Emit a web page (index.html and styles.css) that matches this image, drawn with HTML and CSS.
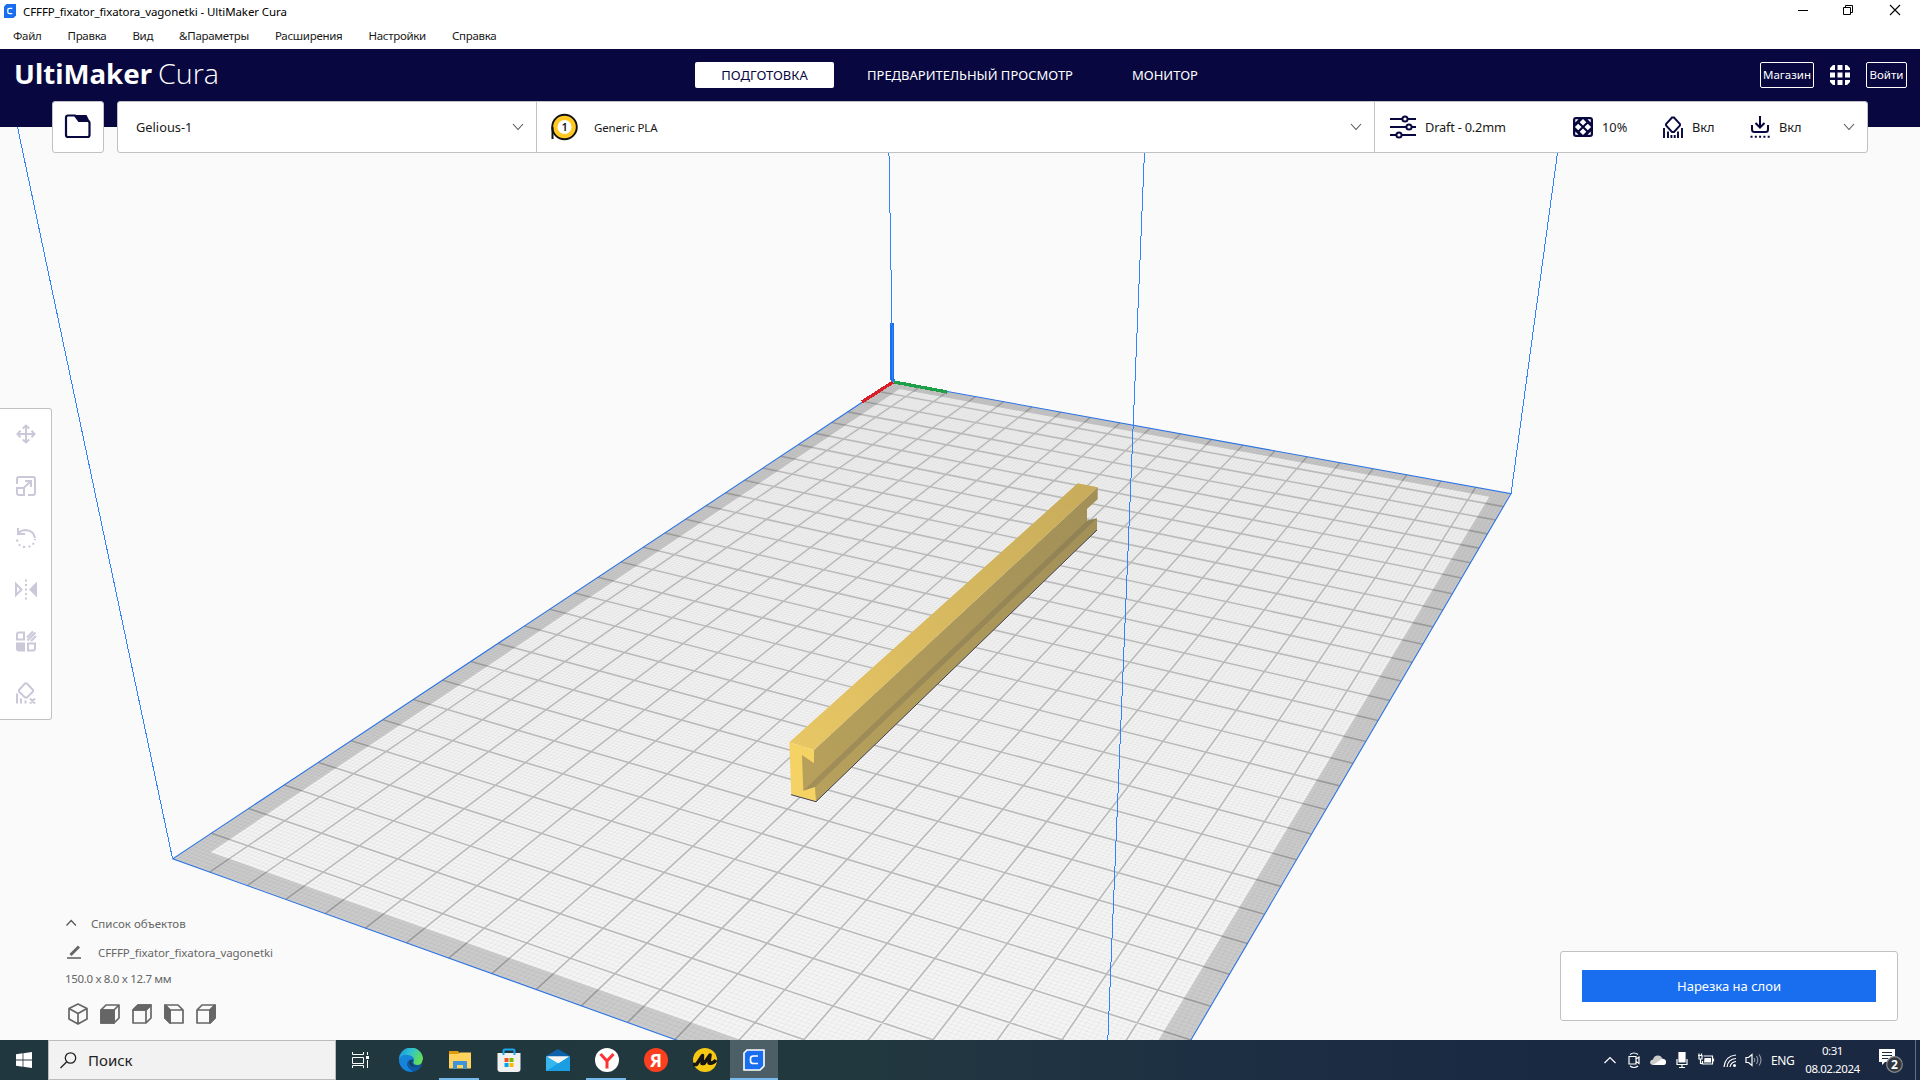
FILE: index.html
```html
<!DOCTYPE html>
<html lang="ru">
<head>
<meta charset="utf-8">
<title>CFFFP_fixator_fixatora_vagonetki - UltiMaker Cura</title>
<link rel="stylesheet" href="styles.css">
</head>
<body>
<div class="titlebar">
  <svg class="app-icon" width="12" height="14" viewBox="0 0 12 14"><path d="M2.500 0H12V11.500L9.500 14H0V2.500Z" fill="#196ef0"/><path d="M8.300 4.300H5.600Q3.800 4.300 3.800 6V8Q3.800 9.700 5.600 9.700H8.300" fill="none" stroke="#fff" stroke-width="1.300"/></svg>
  <span class="title">CFFFP_fixator_fixatora_vagonetki - UltiMaker Cura</span>
  <div class="window-controls">
    <svg width="46" height="20" viewBox="0 0 46 20"><path d="M18 10.500H28" stroke="#000"/></svg>
    <svg width="46" height="20" viewBox="0 0 46 20" fill="none" stroke="#000"><path d="M17.500 7.500H24.500V14.500H17.500ZM19.500 7.500V5.500H26.500V12.500H24.500"/></svg>
    <svg width="46" height="20" viewBox="0 0 46 20"><path d="M18 5L28 15M28 5L18 15" stroke="#000" stroke-width="1.100"/></svg>
  </div>
</div>
<nav class="menubar"><span>Файл</span><span>Правка</span><span>Вид</span><span>&amp;Параметры</span><span>Расширения</span><span>Настройки</span><span>Справка</span></nav>
<header class="header">
  <svg class="logo" width="220" height="52" viewBox="0 0 220 52" fill="#fff"><text class="logo-bold" x="14" y="34.500" textLength="138" lengthAdjust="spacingAndGlyphs">UltiMaker</text><text class="logo-light" x="158" y="34.500" textLength="61" lengthAdjust="spacingAndGlyphs">Cura</text></svg>
  <div class="stages"><span class="stage active">ПОДГОТОВКА</span><span class="stage">ПРЕДВАРИТЕЛЬНЫЙ ПРОСМОТР</span><span class="stage">МОНИТОР</span></div>
  <div class="account">
    <span class="outline-btn market">Магазин</span>
    <svg width="20" height="20" viewBox="0 0 20 20" fill="#fff"><path d="M3 0H5V5H0V3ZM7.500 0H12.500V5H7.500ZM15 0H17L20 3V5H15ZM0 7.500H5V12.500H0ZM7.500 7.500H12.500V12.500H7.500ZM15 7.500H20V12.500H15ZM0 15H5V20H3L0 17ZM7.500 15H12.500V20H7.500ZM15 15H20V17L17 20H15Z"/></svg>
    <span class="outline-btn">Войти</span>
  </div>
</header>
<main class="view">
  <svg class="scene" viewBox="0 127 1920 913">
    <defs>
      <linearGradient id="top" gradientUnits="userSpaceOnUse" x1="800" y1="745" x2="1090" y2="485"><stop offset="0" stop-color="#e7c664"/><stop offset="1" stop-color="#c8ac5b"/></linearGradient>
      <linearGradient id="side" gradientUnits="userSpaceOnUse" x1="815" y1="775" x2="1095" y2="510"><stop offset="0" stop-color="#b6a05b"/><stop offset="1" stop-color="#a29058"/></linearGradient>
      <linearGradient id="groove" gradientUnits="userSpaceOnUse" x1="810" y1="785" x2="1090" y2="520"><stop offset="0" stop-color="#a18e59"/><stop offset="1" stop-color="#918255"/></linearGradient>
      <linearGradient id="bed" x1="0" y1="0" x2="0" y2="1"><stop offset="0" stop-color="#f1f1f1"/><stop offset=".75" stop-color="#f4f4f4"/></linearGradient>
    </defs>
    <g id="plate"></g>
    <g class="axes">
      <path class="axis-z" d="M892 323V378L893 381"/>
      <path class="axis-x" d="M893 382L862 402"/>
      <path class="axis-y" d="M894 382L947 392"/>
    </g>
    <g class="model">
      <path fill="url(#side)" d="M814 750L1097.700 487.300V499.300L1087 509V520.700L1097 518.300V530L816 801.700L802 790V755Z"/>
      <path fill="url(#groove)" d="M803.300 790.700L1087 520.700L1097 518.300L815 787Z"/>
      <path fill="url(#top)" d="M789.300 742.300L1077.700 483.300L1097.700 487.300L814 750Z"/>
      <path fill="#f5d264" d="M789.300 742.300L814 750V763.300L802 755L803.300 790.700L815 787L816 801.700L791.300 794.700Z"/>
      <path d="M791 794.700L816 801.700L1097 530" fill="none" stroke="#3f4054" stroke-width="1"/>
    </g>
    <path class="volume" d="M172.500 858.500L17.500 127M893 382L888.500 127M1511 494L1561 127M1101.500 1193L1145.500 127"/>
  </svg>

  <div class="stage-bar">
    <div class="card open"><svg width="28" height="28" viewBox="0 0 28 28"><path d="M4 2.500H11L15 8H23.500Q25.500 8 25.500 10V22Q25.500 24 23.500 24H4Q2 24 2 22V4.500Q2 2.500 4 2.500Z" fill="none" stroke="#08073f" stroke-width="2.200"/><path d="M10 2H22.500L25.500 8H15Z" fill="#08073f"/></svg></div>
    <div class="card settings">
      <div class="cell printer"><span>Gelious-1</span><svg class="chev" width="12" height="8" viewBox="0 0 12 8"><path d="M1 1L6 6.500L11 1"/></svg></div>
      <div class="cell material">
        <svg width="28" height="28" viewBox="0 0 28 28"><circle cx="14.500" cy="14" r="12.300" fill="#ffc924" stroke="#111" stroke-width="1.900"/><path d="M2.500 14V26" stroke="#111" stroke-width="2"/><circle cx="14.500" cy="14" r="7" fill="#fff"/><text class="spool-no" x="14.500" y="18" text-anchor="middle">1</text></svg>
        <span>Generic PLA</span><svg class="chev" width="12" height="8" viewBox="0 0 12 8"><path d="M1 1L6 6.500L11 1"/></svg></div>
      <div class="cell profile">
        <svg width="26" height="24" viewBox="0 0 26 24" fill="none" stroke="#08073f" stroke-width="2"><path d="M0 4H12.500M17.500 4H26M0 12H16.500M21.500 12H26M0 20H6.500M11.500 20H26"/><circle cx="15" cy="4" r="2.600"/><circle cx="19" cy="12" r="2.600"/><circle cx="9" cy="20" r="2.600"/></svg>
        <span class="draft">Draft - 0.2mm</span>
        <svg width="20" height="20" viewBox="0 0 20 20"><rect width="20" height="20" rx="3" fill="#08073f"/><path fill="#fff" d="M10 1.900L13.300 5.200L10 8.500L6.700 5.200ZM10 11.500L13.300 14.800L10 18.100L6.700 14.800ZM5.200 6.700L8.500 10L5.200 13.300L1.900 10ZM14.800 6.700L18.100 10L14.800 13.300L11.500 10ZM2.300 2.300H5.500L2.300 5.500ZM17.700 2.300V5.500L14.500 2.300ZM2.300 17.700V14.500L5.500 17.700ZM17.700 17.700H14.500L17.700 14.500Z"/></svg>
        <span class="infill">10%</span>
        <svg width="20" height="22" viewBox="0 0 20 22" fill="none" stroke="#08073f" stroke-width="1.900"><path d="M9 1.500H11L17 8V9.500L11 16H9L3 9.500V8Z"/><path d="M1 12V22M5 15.500V22M15 15.500V22M19 12V22M8.400 19V22M11.700 19V22"/></svg>
        <span class="support">Вкл</span>
        <svg width="20" height="22" viewBox="0 0 20 22" fill="none" stroke="#08073f" stroke-width="2"><path d="M10 0V11M5.500 7L10 11.500L14.500 7M2 9V13.500Q2 16 4.500 16H15.500Q18 16 18 13.500V9"/><path d="M.5 20.800H20" stroke-dasharray="2 2.300"/></svg>
        <span class="adhesion">Вкл</span><svg class="chev" width="12" height="8" viewBox="0 0 12 8"><path d="M1 1L6 6.500L11 1"/></svg>
      </div>
    </div>
  </div>

  <aside class="tools">
    <svg viewBox="0 0 20 20"><path d="M10 2V18M2 10H18M6.800 4.500L10 1.500L13.200 4.500M6.800 15.500L10 18.500L13.200 15.500M4.500 6.800L1.500 10L4.500 13.200M15.500 6.800L18.500 10L15.500 13.200"/></svg>
    <svg viewBox="0 0 20 20"><path d="M1 8V3Q1 1 3 1H17Q19 1 19 3V17Q19 19 17 19H12M1 12H8V19H3Q1 19 1 17ZM7 12.500L14.500 5.500M9 5H15V11"/></svg>
    <svg viewBox="0 0 20 20"><path d="M2 0V6H9M2.500 5.500Q5 2 10 2Q18 3 19 10"/><path d="M1 11.500Q2 19 10 19Q18 19 19 11" stroke-dasharray="2 3"/></svg>
    <svg viewBox="0 0 20 20"><path d="M0 5V16L5.500 10.500Z"/><path d="M10 .5V20.500" stroke-dasharray="2 2.500"/><path d="M20 5V16L14.500 10.500Z" fill="#cac8d9"/></svg>
    <svg viewBox="0 0 20 20"><path d="M1 3.500Q1 1.500 3 1.500H8V8.500H1ZM12 12.500H19V17.500Q19 19.500 17 19.500H12ZM11 6.500L17 .5M11.500 9.500L19.500 1.500M15 10L20 5"/><path d="M1 12.500H8V19.500H3Q1 19.500 1 17.500Z" fill="#cac8d9"/></svg>
    <svg viewBox="0 0 20 20"><path d="M9 .5H11L17 7V8.500L11 14.500H9L3 8.500V7ZM1 10.500V20.500M5 15.500V20.500M9.500 17.500V20.500M14 15.500L19 20.500M19 15.500L14 20.500"/></svg>
  </aside>

  <section class="objects">
    <div class="row list"><svg width="12" height="8" viewBox="0 0 12 8"><path d="M1.500 6.500L6.200 1.500L10.900 6.500" fill="none" stroke="#555" stroke-width="1.200"/></svg><span>Список объектов</span></div>
    <div class="row name"><svg width="14" height="14" viewBox="0 0 14 14" fill="none" stroke="#666"><path d="M0 13H14" stroke-width="1.600"/><path d="M3.500 10L12 1.500" stroke-width="3"/></svg><span>CFFFP_fixator_fixatora_vagonetki</span></div>
    <div class="dims">150.0 x 8.0 x 12.7 мм</div>
    <div class="cubes">
      <svg viewBox="0 0 20 22"><path d="M10 1L19 5.500V16L10 21L1 16V5.500ZM1 5.500L10 10.500L19 5.500M10 10.500V21"/></svg>
      <svg viewBox="0 0 20 22"><path d="M1 7L6 2H19V15L14 20H1ZM1 7H14M14 7L19 2M14 7V20"/><path class="solid" d="M1 7H14V20H1Z"/></svg>
      <svg viewBox="0 0 20 22"><path d="M1 7L6 2H19V15L14 20H1ZM1 7H14M14 7L19 2M14 7V20"/><path class="solid" d="M1 7L6 2H19L14 7Z"/></svg>
      <svg viewBox="0 0 20 22"><path d="M19 7L14 2H1V15L6 20H19ZM19 7H6M6 7L1 2M6 7V20"/><path class="solid" d="M1 2L6 7V20L1 15Z"/></svg>
      <svg viewBox="0 0 20 22"><path d="M1 7L6 2H19V15L14 20H1ZM1 7H14M14 7L19 2M14 7V20"/><path class="solid" d="M14 7L19 2V15L14 20Z"/></svg>
    </div>
  </section>

  <section class="card action"><button class="slice">Нарезка на слои</button></section>
</main>

<footer class="taskbar">
  <div class="tb start"><svg width="16" height="16" viewBox="0 0 16 16" fill="#fff"><path d="M0 2.200L6.600 1.300V7.600H0ZM7.400 1.200L16 0V7.600H7.400ZM0 8.400H6.600V14.700L0 13.800ZM7.400 8.400H16V16L7.400 14.800Z"/></svg></div>
  <div class="search"><svg width="17" height="17" viewBox="0 0 17 17" fill="none" stroke="#222" stroke-width="1.300"><circle cx="10.500" cy="6" r="5.200"/><path d="M6.800 9.800L.5 16"/></svg><span>Поиск</span></div>
  <div class="tb view-btn"><svg width="17" height="16" viewBox="0 0 17 16" fill="none" stroke="#fff"><path d="M.5 0V2.500H11.500V0M.5 5.500H11.500V11.500H.5ZM.5 16V13.500H11.500V16M15.500 0V3M15.500 8V16"/><path d="M14 4H17V7H14Z" fill="#fff" stroke="none"/></svg></div>
  <div class="tb"><svg width="24" height="24" viewBox="0 0 24 24"><defs><linearGradient id="e1" x1="0" y1="0" x2="1" y2=".4"><stop offset="0" stop-color="#1590df"/><stop offset=".5" stop-color="#2fc2cf"/><stop offset="1" stop-color="#62de5c"/></linearGradient></defs><circle cx="12" cy="12" r="12" fill="#0c59a4"/><path d="M0 12A12 12 0 0 1 24 11Q24 16.500 18.500 17Q14 17 14.500 14Q16 8 10 8Q3 8 0 12Z" fill="url(#e1)"/><path d="M0 12Q2 6 9 7Q14 7.500 14.500 11.500Q8 11 8 16Q8.500 21 14 23.500A12 12 0 0 1 0 12Z" fill="#1684d9"/><path d="M14.500 11.500Q11 14 13 16.500Q16 20 22 17.500L24 11L24 17L20 18.500Q12 20 10.500 15Q10.500 12 14.500 11.500Z" fill="#223840"/></svg></div>
  <div class="tb running"><svg width="22" height="18" viewBox="0 0 22 18"><path d="M0 0H9L11 3H0Z" fill="#e29a0d"/><path d="M0 3H9L11 1.500H22V17.500H0Z" fill="#ffd35d"/><path d="M4 18V10H18V18H14V14H8V18Z" fill="#3e94d9"/></svg></div>
  <div class="tb"><svg width="24" height="24" viewBox="0 0 24 24"><path d="M6.500 7V3Q6.500 1.500 8 1.500H16Q17.500 1.500 17.500 3V7" fill="none" stroke="#1ca9f2" stroke-width="2"/><path d="M.5 5H23.500V21Q23.500 24 20.500 24H3.500Q.5 24 .5 21Z" fill="#f1f1f1"/><path d="M6.500 7V5M17.500 7V5" stroke="#1ca9f2" stroke-width="2"/><path d="M7.500 10H11.500V14H7.500Z" fill="#f25022"/><path d="M12.500 10H16.500V14H12.500Z" fill="#7fba00"/><path d="M7.500 15H11.500V19H7.500Z" fill="#00a4ef"/><path d="M12.500 15H16.500V19H12.500Z" fill="#ffb900"/></svg></div>
  <div class="tb"><svg width="24" height="22" viewBox="0 0 24 22"><path d="M0 7L12 0L24 7V12H0Z" fill="#0b61ab"/><path d="M1 7.500H23L12 16Z" fill="#f4f4f4"/><path d="M0 7L12 14L24 22H0Z" fill="#35b6ee"/><path d="M24 7L0 22H24Z" fill="#1b9de2"/><path d="M1 7.500H23L12 14Z" fill="#f4f4f4"/></svg></div>
  <div class="tb running"><svg width="24" height="24" viewBox="0 0 24 24"><circle cx="12" cy="12" r="12" fill="#fff"/><path d="M5.500 6L12 13L18.500 6M12 12V20.500" fill="none" stroke="#f33" stroke-width="3"/></svg></div>
  <div class="tb"><svg width="24" height="24" viewBox="0 0 24 24"><circle cx="12" cy="12" r="12" fill="#fc3f1d"/><text class="ya" x="12" y="18.500" text-anchor="middle">Я</text></svg></div>
  <div class="tb"><svg width="24" height="24" viewBox="0 0 24 24"><circle cx="12" cy="12" r="12" fill="#f7c912"/><path d="M0 16.500H3.500L9.500 7.500L9 15.500H11L17 7L16 15Q20 16 23 12" fill="none" stroke="#151515" stroke-width="3.500" stroke-linejoin="round"/></svg></div>
  <div class="tb running current"><svg width="22" height="22" viewBox="0 0 22 22"><path d="M4 1H21V17L17 21H1V4Z" fill="#196ef0" stroke="#fff" stroke-width="1.600"/><path d="M15 7H10.500Q7.500 7 7.500 9.500V12Q7.500 14.500 10.500 14.500H15" fill="none" stroke="#fff" stroke-width="1.700"/></svg></div>
  <div class="tray">
    <svg viewBox="0 0 18 18"><path d="M3.500 12L9 6.500L14.500 12"/></svg>
    <svg viewBox="0 0 18 18"><path d="M4 5.500H11V13H4ZM11 8L14 6V12.500L11 10.500M5 3.500Q9 .5 13 3.500M5 15Q9 18 13 15"/></svg>
    <svg viewBox="0 0 18 18"><path d="M4 14Q1 13.500 1 11Q1.500 8.500 4 8.500Q5 4.500 9 4.500Q12 4.500 13.300 7.500Q17 8 17 11Q17 14 14 14Z" fill="#ccc" stroke="none"/><path d="M4 14L13 8Q17 8 17 11Q17 14 14 14Z" fill="#fff" stroke="none"/></svg>
    <svg viewBox="0 0 18 18"><path d="M6 1.500H12V11H6Z" fill="#fff"/><path d="M4 8V13.500H14V8M9 13V17M6 16.500H12"/></svg>
    <svg viewBox="0 0 18 18"><path d="M6.500 5H15.500V13H5.500V10M16.500 7.500V10.500M1 4.500H5V8H2V4.500M3.500 8V12.500H5M2 2.500V5M4.500 2.500V5"/><path d="M7.500 7H14V11.500H7Z" fill="#fff" stroke="none"/></svg>
    <svg viewBox="0 0 18 18"><path d="M3 16Q4 5 15 4M6 16Q7 8 15 7.500M9 16Q10 11 15 10.500"/><circle cx="13.500" cy="14.500" r="1.500" fill="#fff" stroke="none"/></svg>
    <svg viewBox="0 0 18 18"><path d="M1 6.500H3.500L7 3.500V14.500L3.500 11.500H1Z"/><path d="M9 7Q10.500 9 9 11M11.500 5Q14 9 11.500 13M14 3.500Q18 9 14 14.500" opacity=".5"/></svg>
    <span class="lang">ENG</span>
    <div class="clock"><span>0:31</span><span>08.02.2024</span></div>
    <svg class="note" viewBox="0 0 26 26"><path d="M1 1H17V14H7L4 17V14H1Z" fill="#fff" stroke="none"/><path d="M4 4.500H14M4 7.500H14M4 10.500H10" stroke="#1b2a42"/><circle cx="16.500" cy="16.500" r="7.800" fill="#33383f" stroke="#888"/><text class="badge-no" x="16.500" y="21" text-anchor="middle">2</text></svg>
  </div>
</footer>
<script src="plate.js"></script>
</body>
</html>
```
FILE: styles.css
```css
* { box-sizing: border-box; }
body {
  margin: 0;
  width: 1920px;
  height: 1080px;
  overflow: hidden;
  display: flex;
  flex-direction: column;
  font-family: "Noto Sans", "Open Sans", sans-serif;
  font-size: 12px;
  color: #191919;
  background: #fff;
}
svg { display: block; flex: none; }
span { white-space: nowrap; }

.titlebar { height: 24px; display: flex; align-items: center; padding: 0 0 2px 4px; color: #000; }
.title { margin-left: 7px; font-size: 11.500px; letter-spacing: -.09px; }
.window-controls { margin: 2px 2px 0 auto; display: flex; height: 24px; }

.menubar { height: 25px; display: flex; align-items: center; gap: 26px; padding: 0 0 2px 13px; font-size: 11.500px; letter-spacing: -.29px; }

.header { height: 78px; flex: none; background: #08073f; display: grid; grid-template-columns: 695px 1fr auto; align-items: start; color: #fff; }
.logo-bold { font: 700 27px "Noto Sans", sans-serif; }
.logo-light { font: 300 27px "Open Sans", "Noto Sans", sans-serif; }
.stages { display: flex; height: 52px; align-items: center; font-size: 13px; }
.stage { height: 26px; line-height: 26px; margin-right: 59px; }
.stage.active { background: #fff; color: #08073f; width: 139px; text-align: center; border-radius: 2px; margin-right: 33px; }
.account { height: 52px; display: flex; align-items: center; gap: 16px; padding-right: 13px; }
.outline-btn { height: 26px; line-height: 24px; width: 41px; text-align: center; border: 1px solid #fff; border-radius: 2px; font-size: 11.500px; }
.market { width: 54px; }

.view { flex: 1; position: relative; background: #fafafa; }
.scene { position: absolute; inset: 0; width: 1920px; height: 913px; }
.bed { fill: url(#bed); }
.minor { stroke: rgba(0, 0, 0, .07); stroke-width: .6; fill: none; }
.major { stroke: #bababa; stroke-width: 1.600; fill: none; }
.margin { fill: rgba(0, 0, 0, .17); fill-rule: evenodd; }
.outline { fill: none; stroke: #2d74e4; stroke-width: 1.100; }
.volume { fill: none; stroke: #3282ff; stroke-width: 1; shape-rendering: crispEdges; }
.axes { fill: none; shape-rendering: crispEdges; }
.axis-z { stroke: #196ef0; stroke-width: 4; }
.axis-x { stroke: #d91e28; stroke-width: 3.300; }
.axis-y { stroke: #1f9f47; stroke-width: 3.300; }

.card { background: #fff; border: 1px solid #c0c1c2; border-radius: 3px; }
.stage-bar { position: relative; margin: -26px 52px 0 52px; display: flex; gap: 13px; height: 52px; }
.open { width: 52px; display: grid; place-items: center; }
.settings { flex: 1; display: grid; grid-template-columns: 418px 838px 1fr; }
.cell { display: flex; align-items: center; }
.cell + .cell { border-left: 1px solid #c0c1c2; }
.chev { margin-left: auto; fill: none; stroke: #555; stroke-width: 1.100; }
.printer { padding: 0 12px 0 18px; font-size: 12.800px; }
.material { padding: 0 12px 0 13px; font-size: 11.500px; letter-spacing: -.15px; gap: 16px; }
.spool-no { font: 600 11px "Noto Sans", sans-serif; fill: #111; }
.profile { padding: 0 12px 0 15px; font-size: 12.800px; }
.draft { width: 148px; margin-left: 9px; letter-spacing: -.2px; }
.infill { width: 61px; margin-left: 9px; }
.support { width: 58px; margin-left: 9px; }
.adhesion { margin-left: 9px; }

.tools { position: relative; margin-top: 255px; width: 52px; height: 312px; padding-top: 15px; background: #fff; border: 1px solid #c0c1c2; border-left: 0; border-radius: 0 3px 3px 0; display: flex; flex-direction: column; align-items: center; gap: 31.800px; }
.tools svg { width: 20px; height: 20px; fill: none; stroke: #cac8d9; stroke-width: 2; overflow: visible; }

.objects { position: absolute; left: 65px; bottom: 15px; color: #666; font-size: 12px; }
.row { display: flex; align-items: center; }
.list { height: 28px; gap: 14px; font-size: 11.500px; }
.name { height: 30px; gap: 17px; padding-left: 2px; font-size: 11.500px; letter-spacing: -.08px; }
.dims { height: 22px; line-height: 23px; font-size: 11.500px; letter-spacing: -.33px; }
.cubes { display: flex; gap: 12px; margin: 14px 0 0 3px; }
.cubes svg { width: 20px; height: 22px; fill: none; stroke: #666; stroke-width: 1.700; stroke-linejoin: round; }
.cubes .solid { fill: #666; }

.action { position: absolute; right: 22px; bottom: 19px; width: 338px; height: 70px; display: grid; place-items: center; }
.slice { width: 294px; height: 32px; padding: 0; border: 0; background: #196ef0; color: #fff; font: 13px "Noto Sans", sans-serif; }

.taskbar { height: 40px; flex: none; display: flex; background: linear-gradient(90deg, #21373f 0, #22383f 45%, #1d3043 62%, #1a2942 80%, #1a2842 100%); color: #fff; }
.tb { width: 49px; height: 40px; display: grid; place-items: center; position: relative; }
.start { width: 48px; }
.view-btn { width: 50px; padding-right: 2px; }
.search { width: 288px; background: #f2f2f2; border: 1px solid #bbb; color: #222; display: flex; align-items: center; gap: 11px; padding-left: 11px; font-size: 15px; }
.running::after { content: ""; position: absolute; left: 4px; right: 5px; bottom: 0; height: 2px; background: #76b9ed; }
.current { width: 48px; margin-left: 1px; background: #4d5f66; }
.current::after { left: 0; right: 0; }
.ya { font: 700 18px "Noto Sans", sans-serif; fill: #fff; }
.tray { margin-left: auto; display: flex; align-items: center; gap: 6px; margin-right: 4px; padding-right: 11px; border-right: 1px solid #68707f; }
.tray svg { width: 18px; height: 18px; fill: none; stroke: #fff; stroke-width: 1.200; }
.lang { width: 24px; margin-left: 2px; letter-spacing: -.4px; }
.clock { width: 63px; display: flex; flex-direction: column; align-items: center; line-height: 18px; font-size: 11.500px; letter-spacing: -.45px; }
.tray .note { width: 26px; height: 26px; margin: 2px 0 0 8px; }
.badge-no { font: 700 12px "Noto Sans", sans-serif; fill: #fff; stroke: none; }
```
FILE: plate.js
```js
// Build plate: 200 x 300 mm, projected with the camera's homography.
const W = 200, L = 300, MARGIN = 5;
const project = (x, y) => {
  const u = x / W, v = y / L;
  const w = 1 - 0.13037 * u - 0.39227 * v;
  return ((420.7 * u - 788.3 * v + 893.3) / w).toFixed(2) + ' ' +
         ((47.6 * u + 140.2 * v + 381.7) / w).toFixed(2);
};
const quad = (x0, y0, x1, y1) =>
  `M${project(x0, y0)}L${project(x1, y0)}L${project(x1, y1)}L${project(x0, y1)}Z`;
const lines = (step, skip) => {
  let d = '';
  for (let x = step; x < W; x += step) if (x % skip) d += `M${project(x, 0)}L${project(x, L)}`;
  for (let y = step; y < L; y += step) if (y % skip) d += `M${project(0, y)}L${project(W, y)}`;
  return d;
};
const shapes = [
  ['bed', quad(0, 0, W, L)],
  ['minor', lines(1, 10)],
  ['major', lines(10, 1000)],
  ['margin', quad(0, 0, W, L) + quad(MARGIN, MARGIN, W - MARGIN, L - MARGIN)],
  ['outline', quad(0, 0, W, L)]
];
document.getElementById('plate').innerHTML =
  shapes.map(([name, d]) => `<path class="${name}" d="${d}"/>`).join('');
```
